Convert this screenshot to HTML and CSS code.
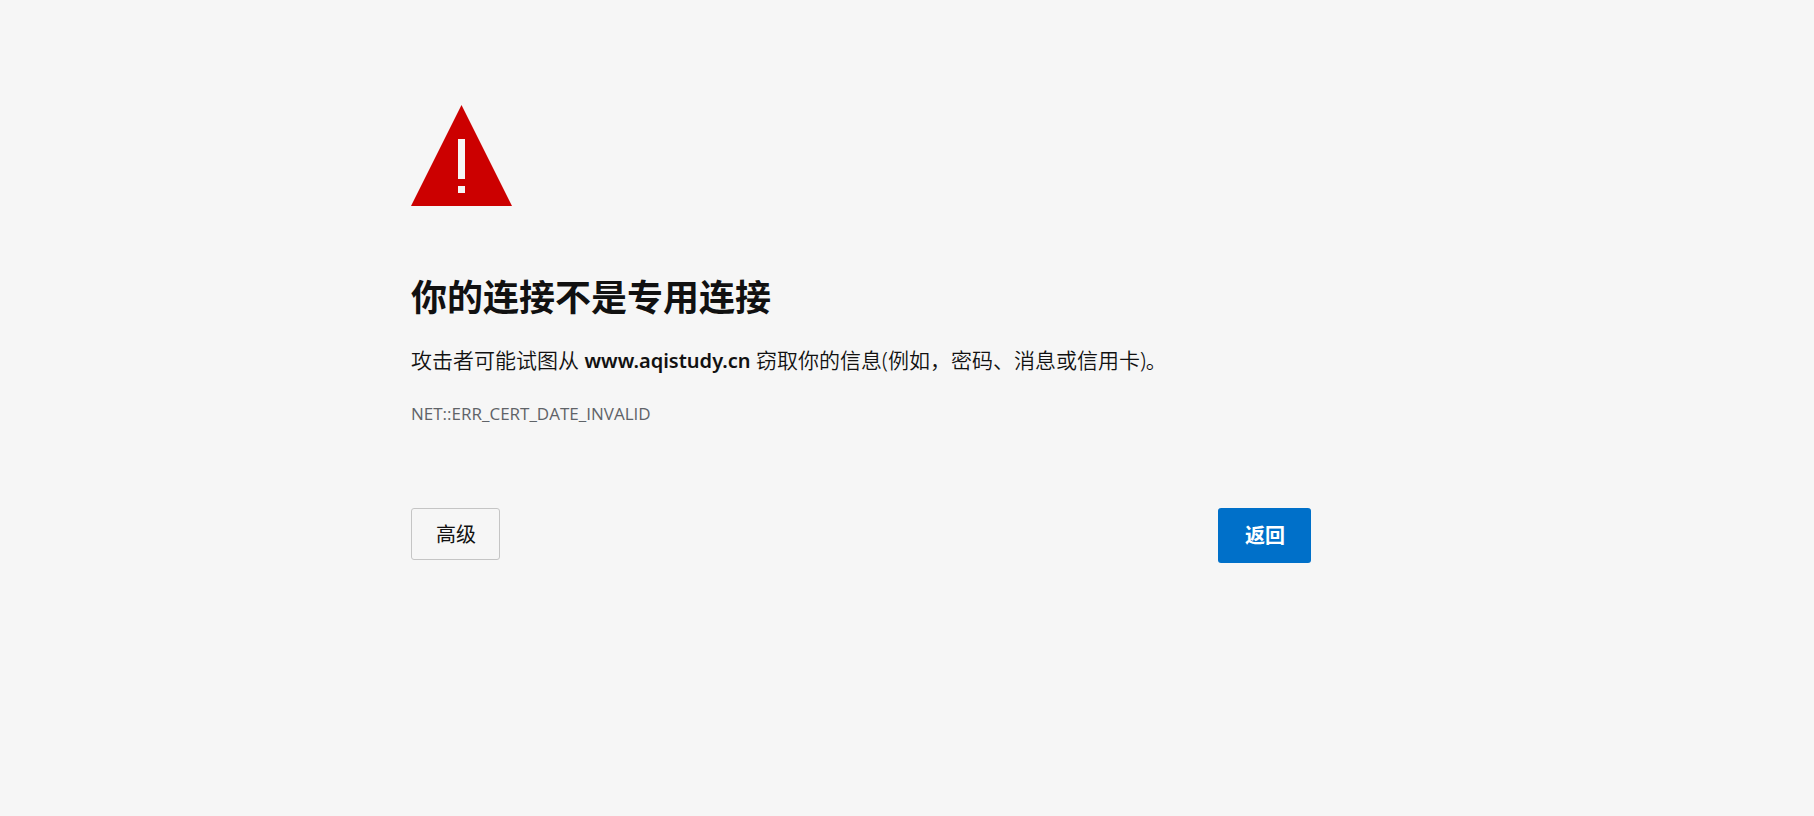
FILE: index.html
```html
<!DOCTYPE html>
<html lang="zh-CN">
  <head>
    <meta charset="utf-8" />
    <meta name="viewport" content="width=device-width, initial-scale=1.0" />
    <title>隐私错误</title>
    <link rel="stylesheet" href="styles.css">
  </head>
  <body>
    <main class="interstitial">
      <svg class="warning-icon" viewBox="0 0 101 101" aria-hidden="true">
        <path fill="#c00" d="M50.5 0L101 101H0z" />
        <path fill="#f6f6f6" d="M47 34h7v40h-7zM47 81h7v7h-7z" />
      </svg>
      <h1 class="title">你的连接不是专用连接</h1>
      <p class="message">攻击者可能试图从 <strong>www.aqistudy.cn</strong> 窃取你的信息(例如，密码、消息或信用卡)。</p>
      <div class="error-code">NET::ERR_CERT_DATE_INVALID</div>
      <div class="actions">
        <button type="button" class="details-button">高级</button>
        <button type="button" class="primary-button">返回</button>
      </div>
    </main>
  </body>
</html>
```
FILE: styles.css
```css
* {
  box-sizing: border-box;
}
body {
  margin: 0;
  background-color: #f6f6f6;
  color: #111;
  font-family: "Noto Sans", "Noto Sans CJK SC", sans-serif;
}
.interstitial {
  max-width: 992px;
  margin: 0 auto;
  padding: 105px 92px 40px 0;
}
.warning-icon {
  display: block;
  width: 101px;
  height: 101px;
}
.title {
  margin: 68px 0 0;
  font-size: 36px;
  line-height: 48px;
}
.message {
  margin: 23px 0 0;
  font-size: 21px;
  font-weight: 350;
  line-height: 30px;
}
.message strong {
  font-size: 20px;
  font-weight: 600;
}
.error-code {
  margin-top: 26px;
  color: #5f6368;
  font-family: "Open Sans", sans-serif;
  font-size: 17px;
  line-height: 24px;
}
.actions {
  display: flex;
  justify-content: space-between;
  align-items: flex-start;
  margin-top: 82px;
}
.details-button,
.primary-button {
  border-radius: 3px;
  font-family: inherit;
  font-size: 20px;
  line-height: 30px;
  cursor: pointer;
}
.details-button {
  padding: 11px 23px 9px 24px;
  border: 1px solid #c5c5c5;
  background-color: transparent;
  color: #111;
}
.primary-button {
  padding: 13px 26px 12px 27px;
  border: none;
  background-color: #0070c9;
  color: white;
  font-weight: bold;
}
```
